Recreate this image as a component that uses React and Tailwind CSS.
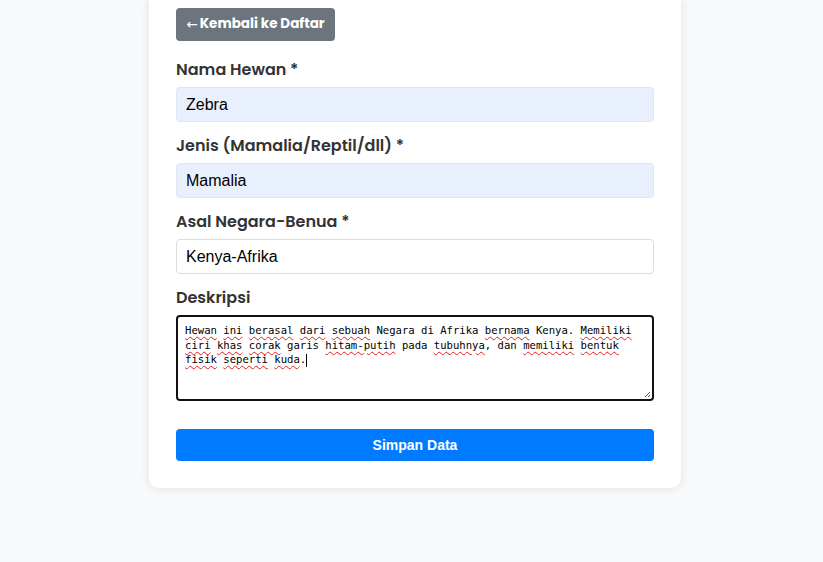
import React from 'react';

const Field = ({ label, value, autofill }) => (
    <div className="mb-3">
        <div className="text-[16px] leading-6 font-semibold text-[#333] mb-[5px] font-['Poppins','Inter',sans-serif]">
            {label}
        </div>
        <div
            className={
                autofill
                    ? "h-[35px] flex items-center px-[9px] border border-[#dfe6f0] bg-[#e8f0fe] rounded-[4px] text-[16px] text-black font-['Liberation_Sans',Arial,sans-serif]"
                    : "h-[35px] flex items-center px-[9px] border border-[#ddd] bg-white rounded-[4px] text-[16px] text-black font-['Liberation_Sans',Arial,sans-serif]"
            }
        >
            {value}
        </div>
    </div>
);

// spellcheck squiggle
const W = ({ children }) => (
    <span className="underline decoration-wavy decoration-[#e02020] decoration-1 underline-offset-[2px]">{children}</span>
);

export default function App() {
    return (
        <div className="min-h-[562px] bg-[#f8f9fa] flex justify-center pl-[7px]">
            <div className="w-[532px] h-[488px] bg-white rounded-b-[10px] shadow-[0_0_10px_rgba(0,0,0,0.1)] px-[27px] pt-2">
                <button
                    type="button"
                    className="h-[33px] w-[159px] bg-[#6c757d] text-white text-[13.5px] font-bold rounded-[4px] flex items-center justify-center mb-[17px] font-['Poppins','Inter',sans-serif]"
                >
                    <span className="font-normal mr-[2px] font-['DejaVu_Sans',sans-serif]">←</span>Kembali ke Daftar
                </button>

                <Field label="Nama Hewan *" value="Zebra" autofill />
                <Field label="Jenis (Mamalia/Reptil/dll) *" value="Mamalia" autofill />
                <Field label="Asal Negara-Benua *" value="Kenya-Afrika" />

                <div className="text-[16px] leading-6 font-semibold text-[#333] mb-[5px] font-['Poppins','Inter',sans-serif]">
                    Deskripsi
                </div>
                <div className="relative h-[86px] border-2 border-[#111] rounded-[4px] px-[7px] pt-[6px] text-[10.6px] leading-[14.5px] text-black font-['DejaVu_Sans_Mono','Liberation_Mono',monospace]">
                    <W>Hewan</W> <W>ini</W> <W>berasal</W> <W>dari</W> <W>sebuah</W> Negara di Afrika <W>bernama</W> Kenya. <W>Memiliki</W>{' '}
                    <W>ciri</W> <W>khas</W> <W>corak</W> garis <W>hitam-putih</W> pada <W>tubuhnya</W>, dan <W>memiliki</W> <W>bentuk</W>{' '}
                    <W>fisik</W> <W>seperti</W> <W>kuda</W>.<span className="inline-block w-px h-[13px] bg-black align-middle"></span>
                    <svg className="absolute right-[1px] bottom-[1px]" width="7" height="7" viewBox="0 0 7 7">
                        <path d="M6 1 L1 6 M6 4 L4 6" stroke="#555" strokeWidth="1" />
                    </svg>
                </div>

                <button
                    type="button"
                    className="mt-[28px] w-full h-[32px] bg-[#007bff] text-white text-[14px] font-bold rounded-[4px] font-['Liberation_Sans',Arial,sans-serif]"
                >
                    Simpan Data
                </button>
            </div>
        </div>
    );
}
